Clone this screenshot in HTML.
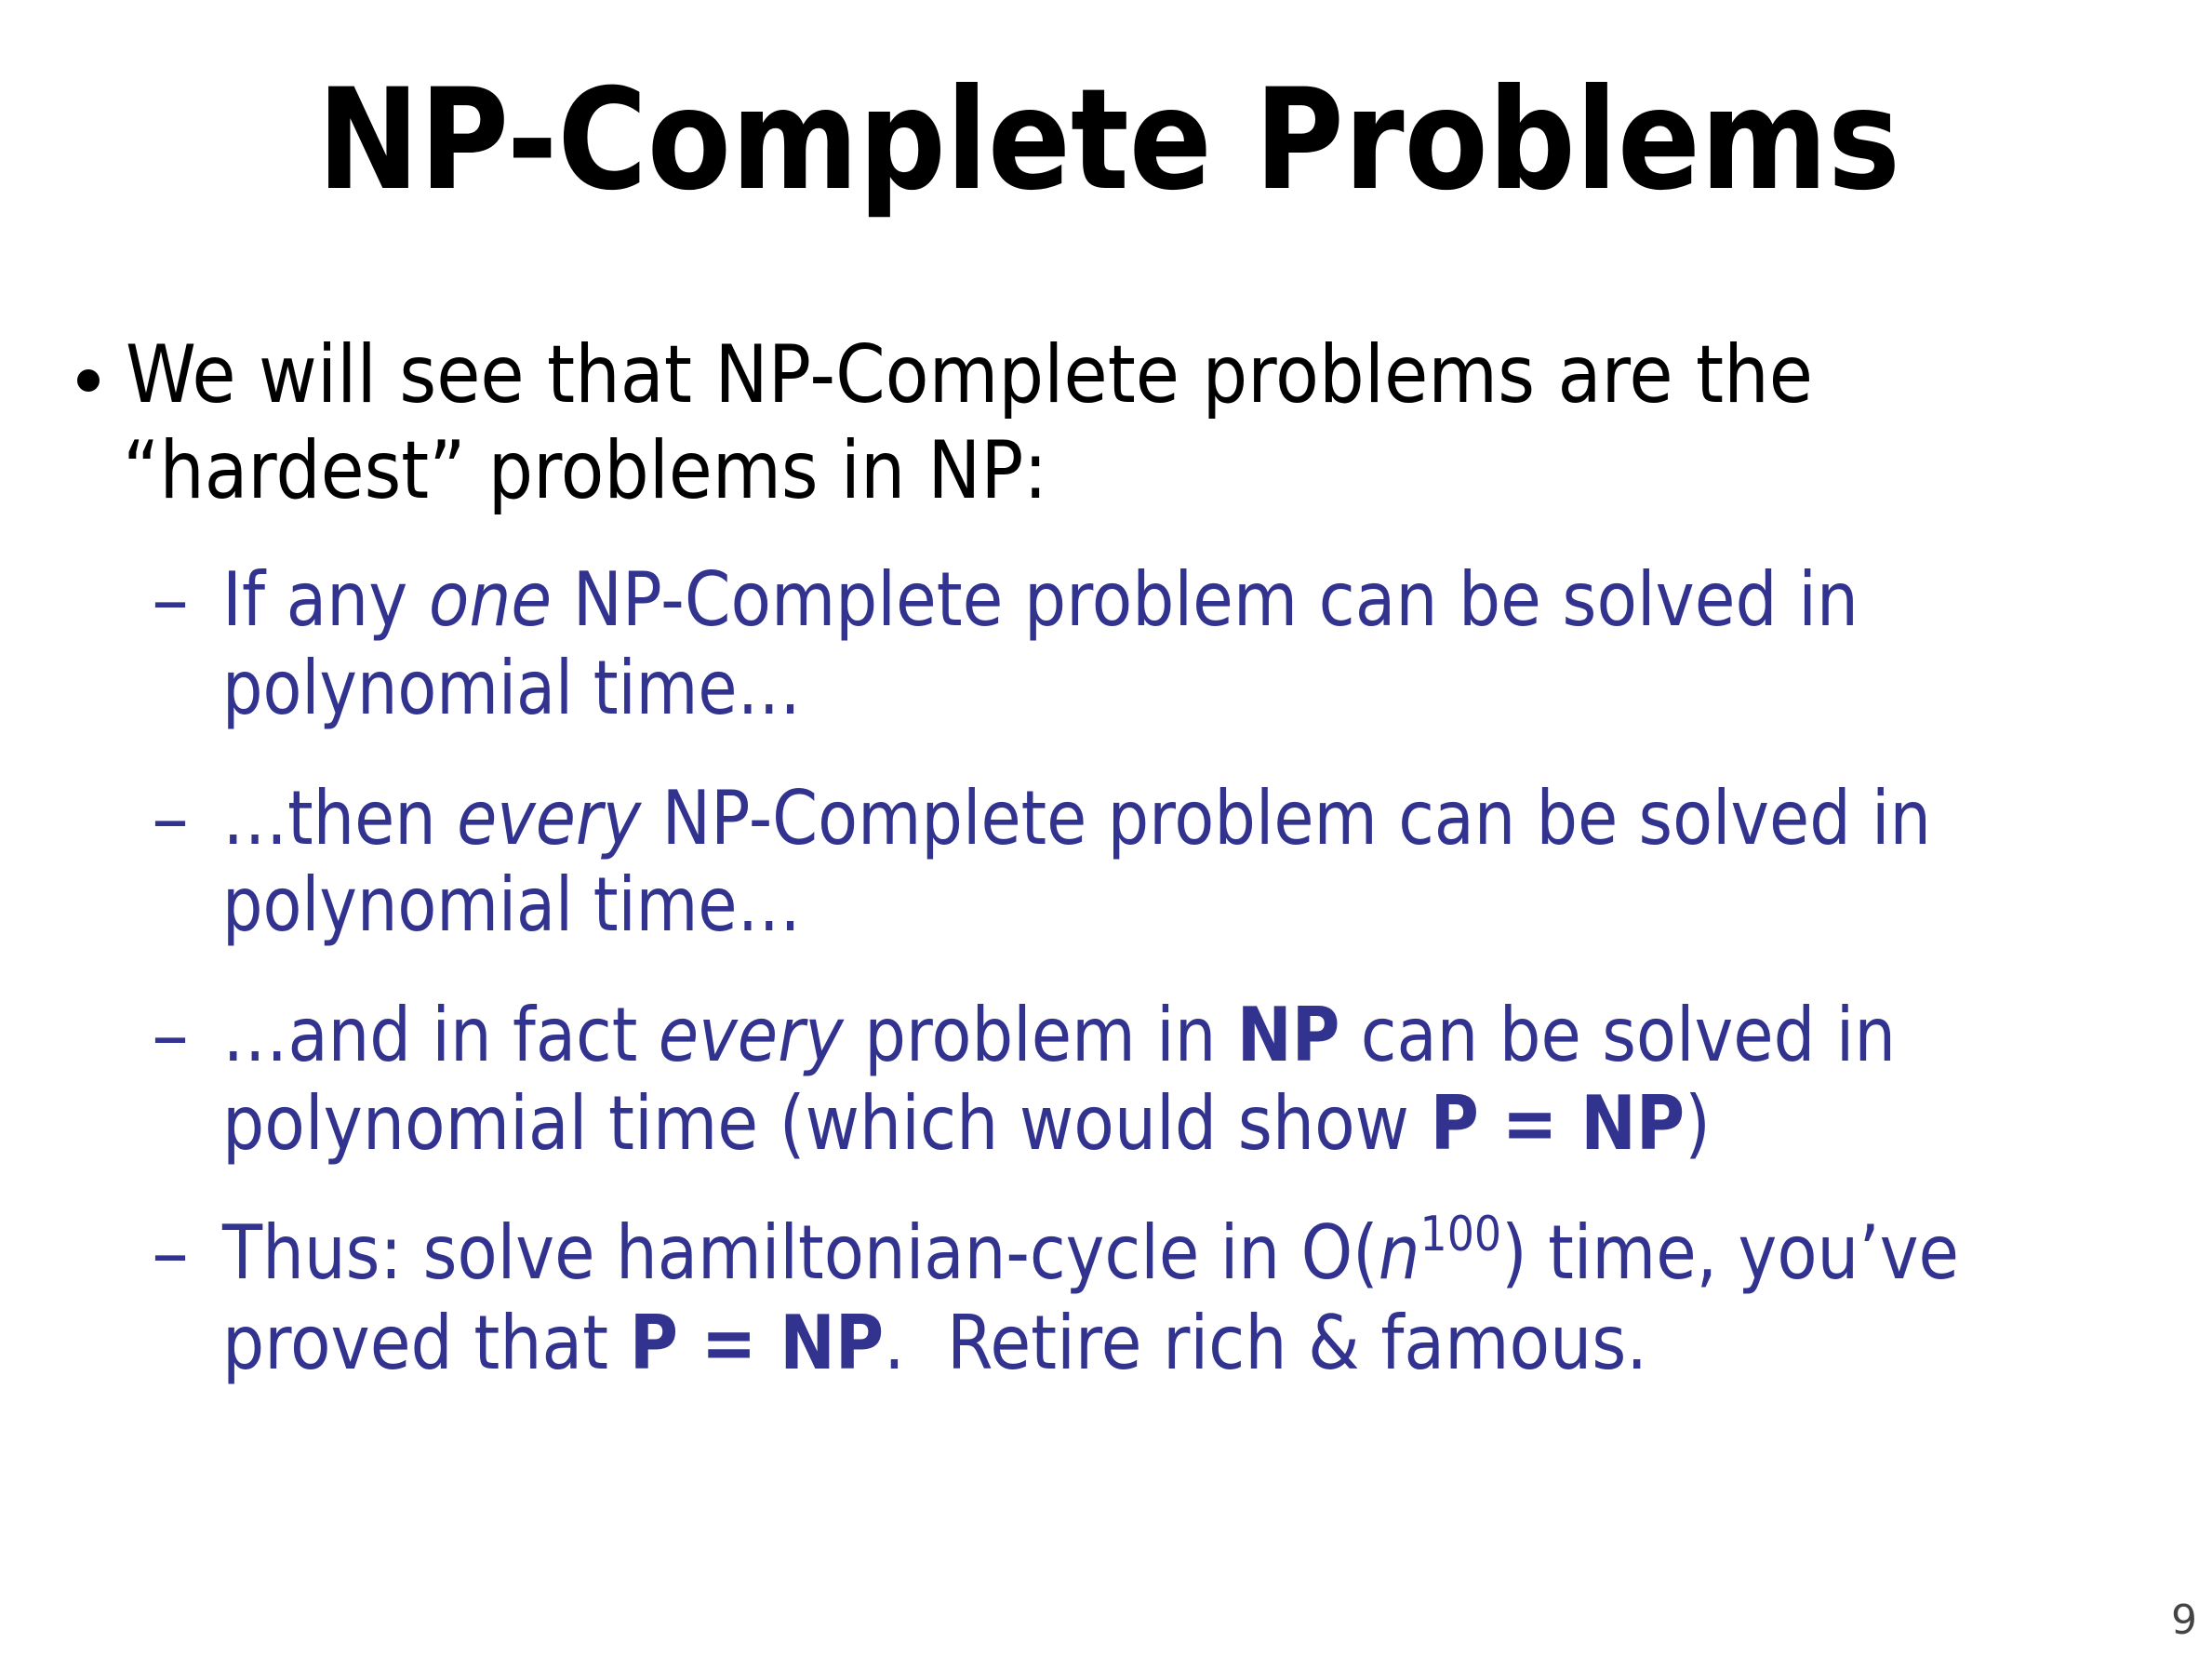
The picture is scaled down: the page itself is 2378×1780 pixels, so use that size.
<!DOCTYPE html>
<html><head><meta charset="utf-8"><style>
html,body{margin:0;padding:0;background:#fff;}
svg{display:block;}
text{font-family:"DejaVu Sans","Liberation Sans",sans-serif;}
.b{fill:#000;font-size:86px;}
.s{fill:#32338f;font-size:80px;}
</style></head><body>
<svg width="2378" height="1780" viewBox="0 0 2378 1780" xmlns="http://www.w3.org/2000/svg">
<text x="341" y="202" font-size="150" font-weight="bold" fill="#000" textLength="1702" lengthAdjust="spacingAndGlyphs">NP-Complete Problems</text>
<circle cx="95" cy="409" r="12" fill="#000"/>
<text class="b" x="135" y="432" textLength="1814" lengthAdjust="spacingAndGlyphs">We will see that NP-Complete problems are the</text>
<text class="b" x="132" y="535" textLength="994" lengthAdjust="spacingAndGlyphs">“hardest” problems in NP:</text>

<text class="s" x="163" y="672">–</text>
<text class="s" x="239" y="672" textLength="1759" lengthAdjust="spacingAndGlyphs">If any <tspan font-style="italic">one</tspan> NP-Complete problem can be solved in</text>
<text class="s" x="239" y="767" textLength="622" lengthAdjust="spacingAndGlyphs">polynomial time…</text>

<text class="s" x="163" y="907">–</text>
<text class="s" x="239" y="907" textLength="1837" lengthAdjust="spacingAndGlyphs">…then <tspan font-style="italic">every</tspan> NP-Complete problem can be solved in</text>
<text class="s" x="239" y="1000" textLength="622" lengthAdjust="spacingAndGlyphs">polynomial time…</text>

<text class="s" x="163" y="1140">–</text>
<text class="s" x="239" y="1140" textLength="1799" lengthAdjust="spacingAndGlyphs">…and in fact <tspan font-style="italic">every</tspan> problem in <tspan font-weight="bold">NP</tspan> can be solved in</text>
<text class="s" x="239" y="1235" textLength="1600" lengthAdjust="spacingAndGlyphs">polynomial time (which would show <tspan font-weight="bold">P = NP</tspan>)</text>

<text class="s" x="163" y="1374">–</text>
<text class="s" x="239" y="1374" textLength="1867" lengthAdjust="spacingAndGlyphs">Thus: solve hamiltonian-cycle in O(<tspan font-style="italic">n</tspan><tspan font-size="52" dy="-30">100</tspan><tspan dy="30">) time, you’ve</tspan></text>
<text class="s" x="239" y="1471" textLength="1532" lengthAdjust="spacingAndGlyphs">proved that <tspan font-weight="bold">P = NP</tspan>.&#160; Retire rich &amp; famous.</text>

<text x="2334" y="1756" font-size="44" fill="#444" font-family="DejaVu Sans, sans-serif">9</text>
</svg>
</body></html>
